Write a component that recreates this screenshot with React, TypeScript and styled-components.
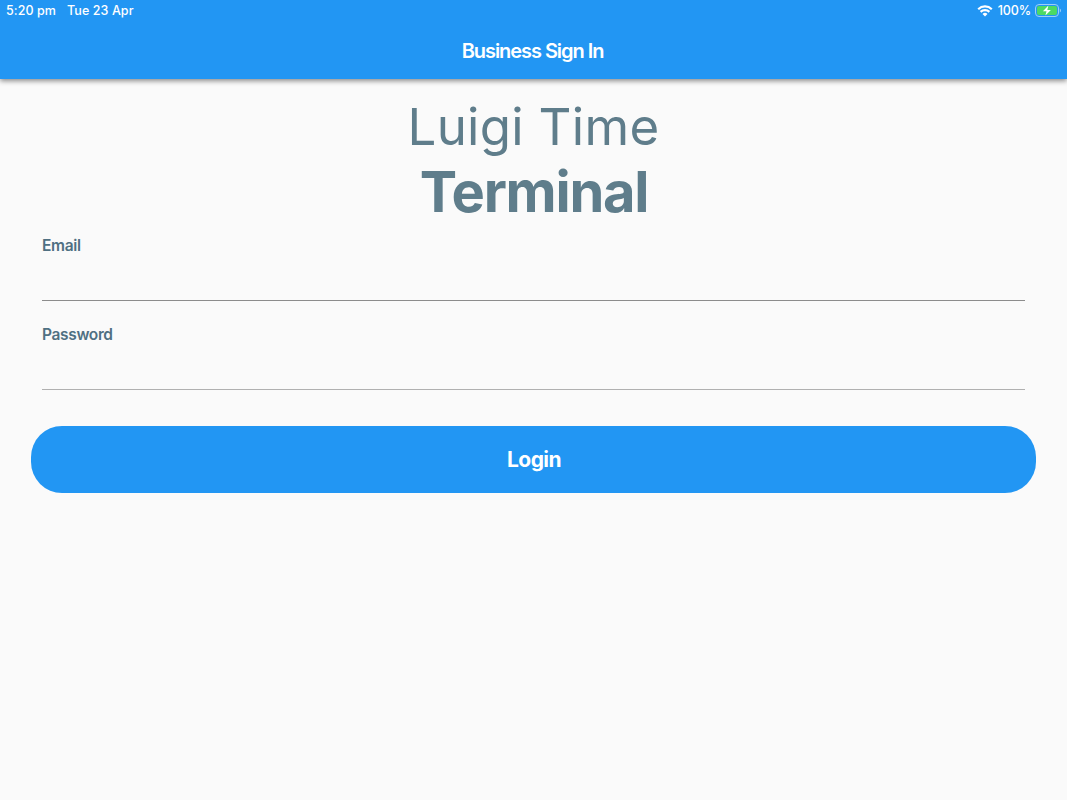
import React from 'react';
import styled, { createGlobalStyle } from 'styled-components';

const GlobalStyle = createGlobalStyle`
  * {
    box-sizing: border-box;
  }

  body {
    margin: 0;
    background: #fafafa;
    font-family: Inter, 'Liberation Sans', sans-serif;
  }
`;

const Screen = styled.div`
  height: 800px;
  overflow: hidden;
  background: #fafafa;
`;

const AppBar = styled.header`
  height: 79px;
  background: #2296f3;
  color: #fff;
  box-shadow: 0 2px 5px rgba(0, 0, 0, 0.45);
`;

const StatusBar = styled.div`
  display: flex;
  justify-content: space-between;
  height: 21px;
  padding: 0 5px 0 6px;
  font-size: 12.5px;
  font-weight: 500;
  line-height: 21px;
  letter-spacing: 0.08px;
`;

const StatusGroup = styled.div<{ $gap: number }>`
  display: flex;
  align-items: center;
  gap: ${props => props.$gap}px;
`;

const StatusText = styled.span`
  &:last-child {
    margin-right: 1px;
  }
`;

const BatteryLevel = styled.span`
  margin-left: 1px;
  letter-spacing: -0.1px;
`;

const BarTitle = styled.h1`
  margin: 0;
  padding-right: 2px;
  font-size: 20px;
  font-weight: 600;
  line-height: 60px;
  letter-spacing: -1.05px;
  text-align: center;
`;

const Heading = styled.div`
  padding-top: 16px;
  color: #5f7d8b;
  text-align: center;
`;

const Brand = styled.div`
  font-size: 51px;
  font-weight: 400;
  line-height: 64px;
  letter-spacing: 0.3px;
`;

const Product = styled.div`
  padding-left: 1px;
  font-size: 56px;
  font-weight: 700;
  line-height: 66px;
  letter-spacing: -1.25px;
`;

const Form = styled.form`
  padding: 12px 31px 0;
`;

const Field = styled.label`
  display: block;
  height: 89px;
  padding: 0 11px;
`;

const FieldLabel = styled.span`
  display: block;
  color: #4f7082;
  font-size: 15.5px;
  font-weight: 600;
  line-height: 18px;
  letter-spacing: -0.35px;
`;

const Input = styled.input<{ $line: string }>`
  display: block;
  width: 983px;
  height: 46px;
  padding: 0;
  border: 0;
  border-bottom: 1px solid ${props => props.$line};
  border-radius: 0;
  outline: 0;
  background: transparent;
  font: inherit;
`;

const LoginButton = styled.button`
  display: block;
  width: 1005px;
  height: 66.5px;
  margin-top: 11px;
  padding: 0 0 0 1px;
  border: 0;
  border-radius: 31px;
  background: #2296f3;
  color: #fff;
  font-family: inherit;
  font-size: 21px;
  font-weight: 700;
  letter-spacing: -0.6px;
`;

function WifiIcon() {
  return (
    <svg width="16" height="12" viewBox="0 0 16 12" fill="none" stroke="#fff" strokeWidth="2.2">
      <path d="M1.2 4.2a9.8 9.8 0 0 1 13.6 0M3.6 6.9a6.4 6.4 0 0 1 8.8 0" />
      <path d="M8 11.5 5.5 9a3.6 3.6 0 0 1 5 0z" fill="#fff" stroke="none" />
    </svg>
  );
}

function BatteryIcon() {
  return (
    <svg width="27" height="13" viewBox="0 0 27 13">
      <rect x=".5" y=".5" width="23" height="12" rx="3.5" fill="none" stroke="#9bcff8" />
      <rect x="2" y="2" width="20" height="9" rx="2" fill="#4cd964" />
      <path d="M24.8 4.5v4c1.6-.6 1.6-3.4 0-4z" fill="#9bcff8" />
      <path d="M13.4 1.5 7.9 7.2h3.6l-1.1 4.3L15.9 6h-3.6z" fill="#fff" />
    </svg>
  );
}

export default function App() {
  return (
    <Screen>
      <GlobalStyle />
      <AppBar>
        <StatusBar>
          <StatusGroup $gap={11}>
            <StatusText>5:20 pm</StatusText>
            <StatusText>Tue 23 Apr</StatusText>
          </StatusGroup>
          <StatusGroup $gap={4}>
            <WifiIcon />
            <BatteryLevel>100%</BatteryLevel>
            <BatteryIcon />
          </StatusGroup>
        </StatusBar>
        <BarTitle>Business Sign In</BarTitle>
      </AppBar>
      <Heading>
        <Brand>Luigi Time</Brand>
        <Product>Terminal</Product>
      </Heading>
      <Form>
        <Field>
          <FieldLabel>Email</FieldLabel>
          <Input type="email" $line="#8c8c8c" />
        </Field>
        <Field>
          <FieldLabel>Password</FieldLabel>
          <Input type="password" $line="#b0b0b0" />
        </Field>
        <LoginButton type="button">Login</LoginButton>
      </Form>
    </Screen>
  );
}
